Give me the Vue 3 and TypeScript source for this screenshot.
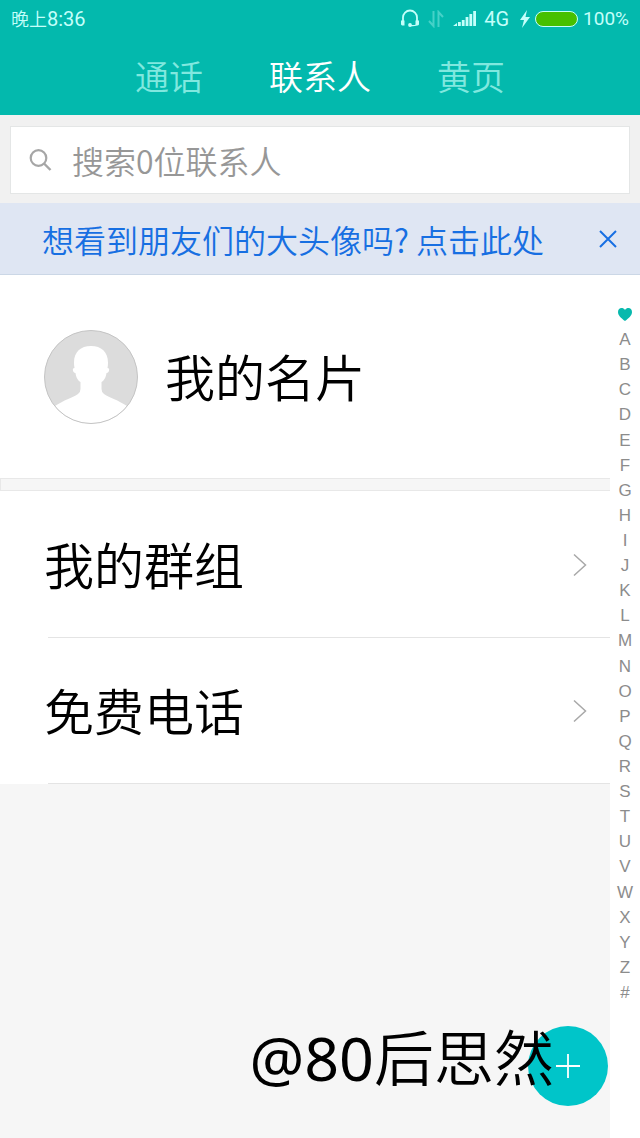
<script setup lang="ts">
import { ref } from 'vue'

interface Tab {
  id: string
  label: string
}

const tabs: Tab[] = [
  { id: 'calls', label: '通话' },
  { id: 'contacts', label: '联系人' },
  { id: 'yellow', label: '黄页' },
]
const activeTab = ref('contacts')
const query = ref('')
const bannerOpen = ref(true)
const entries: string[] = ['我的群组', '免费电话']
const letters: string[] = [...'ABCDEFGHIJKLMNOPQRSTUVWXYZ#']
</script>

<template>
  <div class="page">
    <header class="header">
      <div class="status">
        <span class="clock">晚上<span class="digits">8:36</span></span>
        <div class="status-icons">
          <svg class="headset" viewBox="0 0 20 20" width="20" height="20" aria-hidden="true">
            <path d="M3 13V8.500a7 7 0 0 1 14 0V13" fill="none" stroke="currentColor" stroke-width="1.800" />
            <path d="M1 11.500h3.500v5H2L1 15.500zM19 11.500h-3.500v5H18L19 15.500z" fill="currentColor" />
            <path d="M16.500 16Q14 17 10 16.500" fill="none" stroke="currentColor" stroke-width="1.300" />
            <circle cx="10" cy="16" r="1.900" fill="currentColor" />
          </svg>
          <svg class="arrows" viewBox="0 0 16 18" width="16" height="18" aria-hidden="true">
            <path d="M5.500 1v15L1 11M10.500 17V2l4.500 5" fill="none" stroke="currentColor" stroke-width="2" />
          </svg>
          <svg class="signal" viewBox="0 0 23 18" width="23" height="18" aria-hidden="true">
            <path d="M0 16l4-3v3zM5 12h2.800v4H5zM8.800 10h2.800v6H8.800zM12.600 7h2.800v9h-2.800zM16.400 4h2.800v12h-2.800zM20.200 1H23v15h-2.800z" fill="currentColor" />
          </svg>
          <span class="network">4G</span>
          <svg class="bolt" viewBox="0 0 10 18" width="10" height="18" aria-hidden="true">
            <path d="M7 0L0 10h4l-2 8 8-11H5.500z" fill="currentColor" />
          </svg>
          <span class="battery"></span>
          <span class="percent">100%</span>
        </div>
      </div>
      <nav class="tabs">
        <button
          v-for="tab in tabs"
          :key="tab.id"
          type="button"
          class="tab"
          :class="{ active: tab.id === activeTab }"
          @click="activeTab = tab.id"
        >{{ tab.label }}</button>
      </nav>
    </header>

    <div class="search-bar">
      <label class="search">
        <svg viewBox="0 0 24 24" width="24" height="24" aria-hidden="true">
          <circle cx="9.500" cy="10" r="7.800" fill="none" stroke="#a6a6a6" stroke-width="2.200" />
          <path d="M15 15.500L21.500 22" stroke="#a6a6a6" stroke-width="2.400" />
        </svg>
        <input v-model="query" type="text" placeholder="搜索0位联系人" aria-label="搜索联系人" />
      </label>
    </div>

    <div v-if="bannerOpen" class="banner">
      <a href="#avatars">想看到朋友们的大头像吗? 点击此处</a>
      <button type="button" class="close" aria-label="关闭" @click="bannerOpen = false">
        <svg viewBox="0 0 18 18" width="18" height="18" aria-hidden="true">
          <path d="M1 1l16 16M17 1L1 17" stroke="#176fe2" stroke-width="2" />
        </svg>
      </button>
    </div>

    <div class="body">
      <main class="content">
        <a class="card" href="#me">
          <svg viewBox="0 0 94 94" width="94" height="94" aria-hidden="true">
            <circle cx="47" cy="47" r="46.500" fill="#dcdcdc" />
            <path
              d="M11 76C20 70 28 68 34 64q2.500-2 2.500-5V52C33 50 32 46 31.500 43C29 43 27.500 38 30.500 38C28 24 35 16 47 16S66 24 63.500 38C66.500 38 65 43 62.500 43C62 46 61 50 57.500 52V59q0 3 2.500 5C66 68 74 70 83 76A46 46 0 0 1 11 76z"
              fill="#fff"
            />
            <circle cx="47" cy="47" r="46.500" fill="none" stroke="#c4c4c4" />
          </svg>
          <span class="title">我的名片</span>
        </a>
        <div class="separator"></div>
        <ul class="entries">
          <li v-for="entry in entries" :key="entry">
            <a class="entry" href="#entry">
              <span class="title">{{ entry }}</span>
              <svg viewBox="0 0 14 24" width="14" height="24" aria-hidden="true">
                <path d="M1 1.500L12.500 12 1 22.500" fill="none" stroke="#a8a8a8" stroke-width="1.500" />
              </svg>
            </a>
          </li>
        </ul>
      </main>
      <nav class="index" aria-label="字母索引">
        <a href="#favorites" aria-label="收藏">
          <svg viewBox="0 0 14 13" width="14" height="13" aria-hidden="true">
            <path d="M7 13C3 10 0 7.500 0 4C0-.5 5-1 7 2C9-1 14-.5 14 4C14 7.500 11 10 7 13z" fill="#07b9ad" />
          </svg>
        </a>
        <a v-for="letter in letters" :key="letter" href="#letter">{{ letter }}</a>
      </nav>
    </div>

    <button type="button" class="add" aria-label="新建联系人">
      <svg viewBox="0 0 24 24" width="24" height="24" aria-hidden="true">
        <path d="M12 0v24M0 12h24" stroke="#fff" stroke-width="1.800" />
      </svg>
    </button>
    <div class="signature"><span class="latin">@80</span>后思然</div>
  </div>
</template>

<style>
body {
  margin: 0;
}
</style>

<style scoped>
.page {
  position: relative;
  display: flex;
  flex-direction: column;
  min-height: 100vh;
  background: #fff;
  font-family: "Noto Sans CJK SC DemiLight", "Noto Sans CJK SC", sans-serif;
  font-weight: 350;
}
button,
input {
  padding: 0;
  border: 0;
  background: none;
  font: inherit;
}
a {
  color: inherit;
  text-decoration: none;
}
svg {
  display: block;
  flex: none;
}
.header {
  box-sizing: border-box;
  height: 115px;
  background: #03b9ad;
}
.status {
  display: flex;
  align-items: center;
  justify-content: space-between;
  height: 37px;
  padding: 0 11px;
  color: #c4fffa;
}
.clock {
  font-size: 18px;
  line-height: 24px;
}
.digits,
.network,
.percent {
  font-family: Roboto, sans-serif;
  font-size: 20px;
  font-weight: 400;
  line-height: 24px;
}
.percent {
  font-size: 19px;
}
.status-icons {
  display: flex;
  align-items: center;
}
.arrows {
  margin-left: 8px;
  opacity: 0.35;
}
.signal {
  margin-left: 9px;
}
.network {
  margin-left: 8px;
}
.bolt {
  margin-left: 11px;
}
.battery {
  box-sizing: border-box;
  width: 43px;
  height: 16px;
  margin: 0 5px;
  border: 1px solid #c4fffa;
  border-radius: 8px;
  background: #47c000;
}
.tabs {
  display: flex;
  justify-content: center;
  gap: 66px;
}
.tab {
  color: #80e8df;
  font-size: 34px;
  line-height: 77px;
  cursor: pointer;
}
.tab.active {
  color: #fff;
}
.search-bar {
  padding: 11px 10px 9px;
  background: #f1f1f1;
}
.search {
  display: flex;
  align-items: center;
  gap: 19px;
  box-sizing: border-box;
  height: 68px;
  padding: 0 18px;
  border: 1px solid #e4e6e6;
  background: #fff;
}
.search input {
  flex: 1;
  min-width: 0;
  height: 64px;
  outline: 0;
  font-size: 32px;
}
.search input::placeholder {
  color: #979797;
  opacity: 1;
}
.banner {
  display: flex;
  align-items: center;
  justify-content: space-between;
  box-sizing: border-box;
  height: 72px;
  padding: 0 23px 0 42px;
  border-bottom: 1px solid #cbd7e6;
  background: #dfe6f3;
  color: #176fe2;
  font-size: 32px;
  line-height: 48px;
}
.close {
  cursor: pointer;
}
.body {
  display: flex;
  flex: 1;
}
.content {
  flex: 1;
  background: #f6f6f6;
}
.card {
  display: flex;
  align-items: center;
  gap: 27px;
  box-sizing: border-box;
  height: 203px;
  padding-left: 44px;
  background: #fff;
}
.title {
  padding-bottom: 4px;
  color: #000;
  font-size: 50px;
  font-weight: 400;
  line-height: 72px;
}
.separator {
  height: 11px;
  border: 1px solid #e8e8e8;
  border-right: 0;
}
.entries {
  margin: 0;
  padding: 1px 0 0 48px;
  background: #fff;
  list-style: none;
}
.entries li {
  border-bottom: 1px solid #e4e4e4;
}
.entry {
  display: flex;
  align-items: center;
  justify-content: space-between;
  height: 145px;
  margin-left: -4px;
  padding-right: 23px;
}
.index {
  display: grid;
  grid-auto-rows: 1fr;
  box-sizing: border-box;
  width: 30px;
  padding: 27px 0 133px;
  color: #8c8c8c;
  font-family: "Liberation Sans", Arial, sans-serif;
  font-size: 17px;
  font-weight: 400;
  line-height: 25px;
}
.index a {
  display: flex;
  align-items: center;
  justify-content: center;
}
.add {
  position: absolute;
  right: 32px;
  bottom: 32px;
  display: flex;
  align-items: center;
  justify-content: center;
  width: 80px;
  height: 80px;
  border-radius: 50%;
  background: #00c5c9;
  cursor: pointer;
}
.signature {
  position: absolute;
  right: 86px;
  bottom: 36px;
  color: #000;
  font-size: 60px;
  font-weight: 400;
  line-height: 88px;
  white-space: nowrap;
  pointer-events: none;
}
.latin {
  font-family: "Noto Sans", sans-serif;
  font-size: 61px;
}
</style>
